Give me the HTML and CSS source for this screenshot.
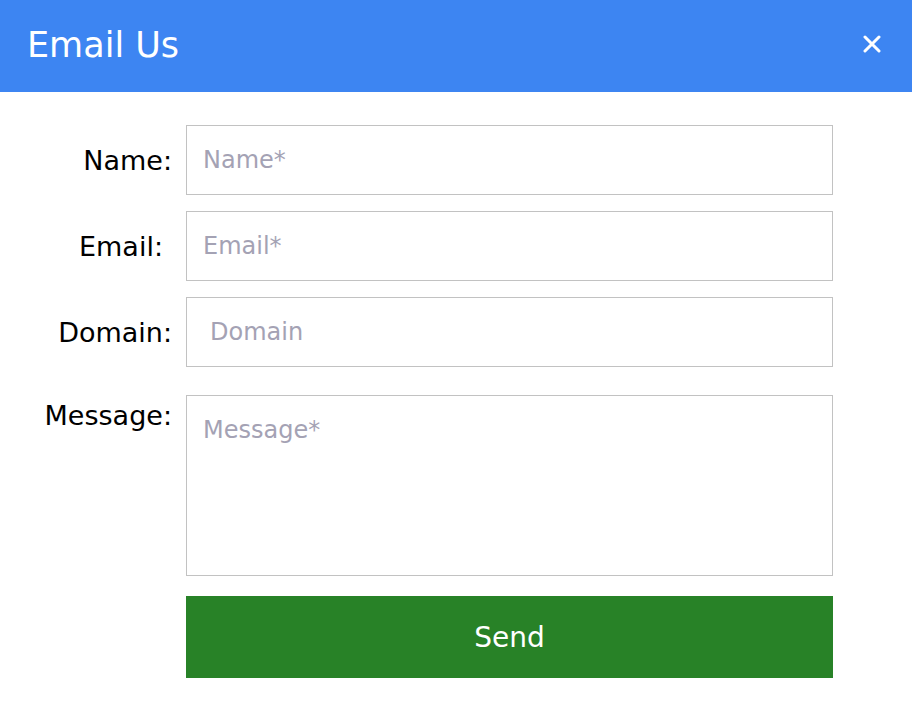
FILE: index.html
```html
<!DOCTYPE html>
<html lang="en">
<head>
    <meta charset="UTF-8">
    <title>Email Us</title>
    <link rel="stylesheet" href="styles.css">
</head>
<body>
<div id="dialog">
    <div class="head">
        <h1 class="title">Email Us</h1>
        <a class="close">
            <svg width="18" height="18" viewBox="0 0 18 18"><path d="M2 2L16 16M16 2L2 16" stroke="#fff" stroke-width="3" stroke-linecap="round"/></svg>
        </a>
    </div>
    <form class="form">
        <label class="lbl">Name:</label>
        <input class="field" type="text" placeholder="Name*">
        <label class="lbl lbl-email">Email:</label>
        <input class="field" type="text" placeholder="Email*">
        <label class="lbl">Domain:</label>
        <input class="field field-domain" type="text" placeholder="Domain">
        <label class="lbl lbl-top">Message:</label>
        <textarea class="field area" placeholder="Message*"></textarea>
        <span></span>
        <button class="send" type="button">Send</button>
    </form>
</div>
</body>
</html>
```

FILE: styles.css
```css
body{
    margin: 0px;
    background: #fff;
    font-family: "DejaVu Sans", "Liberation Sans", sans-serif;
}
#dialog{
    width: 912px;
}
.head{
    height: 92px;
    background: #3d85f2;
    display: flex;
    align-items: center;
    justify-content: space-between;
    padding: 0 31px 0 27px;
    box-sizing: border-box;
}
.title{
    margin: 0px;
    margin-top: -3px;
    font-size: 35px;
    font-weight: 400;
    color: #fff;
}
.close{
    display: flex;
    margin-top: -4px;
}
.form{
    display: grid;
    grid-template-columns: 172px 647px;
    column-gap: 14px;
    row-gap: 16px;
    padding-top: 33px;
}
.lbl{
    font-size: 27px;
    color: #000;
    text-align: right;
    align-self: center;
}
.lbl-email{
    padding-right: 9px;
}
.lbl-top{
    align-self: start;
    padding-top: 17px;
}
.field{
    height: 70px;
    box-sizing: border-box;
    border: 1px solid #c2c2c2;
    padding: 0 16px;
    font-family: inherit;
    font-size: 24px;
    color: #333;
    outline: none;
    margin: 0px;
}
.field::placeholder{
    color: #a4a2b4;
}
.field-domain{
    padding-left: 23px;
}
.area{
    height: 181px;
    margin-top: 12px;
    padding-top: 20px;
    resize: none;
}
.send{
    height: 82px;
    margin-top: 4px;
    border: none;
    background: #288227;
    color: #fff;
    font-family: inherit;
    font-size: 28px;
}
```
